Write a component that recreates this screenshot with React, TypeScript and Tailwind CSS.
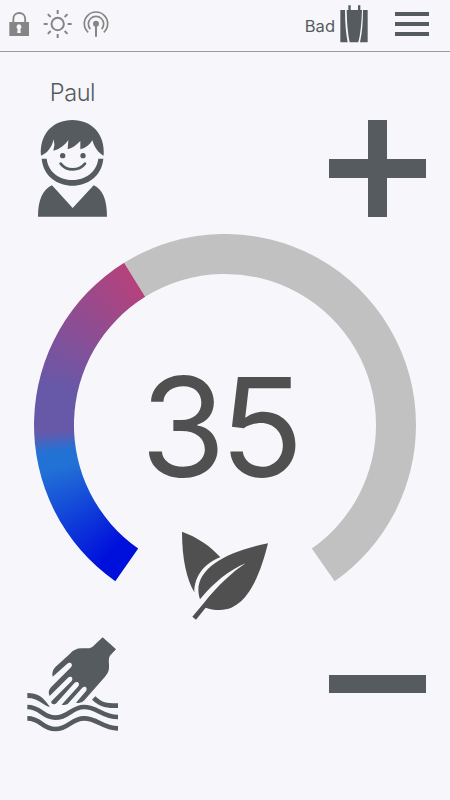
function LockIcon() {
  return (
    <svg viewBox="27 33 63 78" className="h-[26px] w-[21px]" fill="#858585">
      <path
        fillRule="evenodd"
        d="M28 66H87V108H28ZM57 73a8 8 0 0 0-4 14.500L51.500 99H62.500L61 87.500A8 8 0 0 0 57 73Z"
      />
      <path d="M40 66V57C40 33 75.500 33 75.500 57V66" fill="none" stroke="#858585" strokeWidth="5.500" />
    </svg>
  );
}

function SunIcon() {
  return (
    <svg viewBox="129 27 90 90" className="h-[30px] w-[30px]" fill="none" stroke="#858585" strokeWidth="6">
      <circle cx="173" cy="72" r="18.500" />
      <path d="M173 30V42M173 102V114M131 72H143M203 72H215M143.500 42.500L152 51M194 93L202.500 101.500M202.500 42.500L194 51M152 93L143.500 101.500" />
    </svg>
  );
}

function SignalIcon() {
  return (
    <svg viewBox="249 30 78 84" className="h-[28px] w-[26px]" fill="none" stroke="#858585" strokeWidth="5">
      <path d="M264.500 97A35 35 0 1 1 311.500 97" />
      <path d="M271 87.500A23 23 0 1 1 305 87.500" />
      <circle cx="288" cy="71" r="9" fill="#858585" stroke="none" />
      <path d="M288 72V110" strokeWidth="6" />
    </svg>
  );
}

function TowelIcon() {
  return (
    <svg viewBox="150 15 84 114" className="h-[38px] w-[28px]" fill="#555b5e">
      <path d="M151 30H165Q165 88 173 127H151Z" />
      <path d="M219 30H233V127H210Q219 88 219 30Z" />
      <path d="M170 30H175V16H182V30H204V16H211V30H216Q214 92 205 127H179Q171 92 170 30Z" />
    </svg>
  );
}

function PersonIcon() {
  return (
    <svg viewBox="36 147 213 294" className="h-[98px] w-[71px]" fill="#555b5e">
      <path d="M48 257C43 191 85 150 142 150C199 150 241 191 236 257C220 249 208 232 202 211C194 225 182 234 166 238V213C154 225 143 234 128 238L130 210C119 226 104 238 85 242Q91 225 86 208C80 234 66 250 48 257Z" />
      <path d="M50 266H65C75 351 209 351 220 266H235C225 374 60 374 50 266Z" />
      <circle cx="113" cy="257" r="8" />
      <circle cx="174" cy="257" r="8" />
      <path d="M107 281C124 304 162 304 180 281" fill="none" stroke="#555b5e" strokeWidth="8" strokeLinecap="round" />
      <path d="M81 346L143 414L206 346C233 358 246 389 246 440H39C39 389 54 358 81 346Z" />
    </svg>
  );
}

function LeafIcon() {
  return (
    <svg viewBox="33 33 264 270" className="h-[90px] w-[88px]" fill="#505050">
      <path d="M36 35C80 51 121 77 151 112C108 128 73 164 73 217C51 178 36 120 36 35Z" />
      <path d="M294 70C271 163 231 270 150 270C132 270 119 268 107 263L78 299L67 290L101 250C145 195 187 156 227 130C177 151 131 188 90 238C62 155 159 95 294 70Z" />
    </svg>
  );
}

function HandIcon() {
  return (
    <svg viewBox="36 36 276 285" className="h-[95px] w-[92px]" fill="#555b5e">
      <path d="M263 37L303 73L286 91C277 103 285 119 281 136C279 144 275 149 270 155L208 226Q199 237 183 233L213 198C219 188 210 181 202 188L158 237Q149 241 140 239L190 184C196 174 187 167 179 173L124 235C117 242 105 235 110 228L170 168C176 158 168 151 159 158L104 213C99 203 101 195 108 187L168 127C176 117 165 108 156 117L113 155C110 143 113 134 122 125L165 86C174 76 185 70 200 70H223L232 66Z" />
      <path d="M37 204C68 204 84 215 105 246C83 242 72 219 37 219Z" />
      <path d="M241 214C266 236 276 235 309 235V249C276 249 258 248 231 224Z" />
      <path
        d="M37 246C79 246 81 278 121 278C161 278 169 246 207 246C248 246 261 276 309 276M37 280C79 280 81 312 121 312C161 312 169 280 207 280C248 280 261 310 309 310"
        fill="none"
        stroke="#555b5e"
        strokeWidth="14"
      />
    </svg>
  );
}

function Header() {
  return (
    <header className="flex h-[52px] items-start justify-between border-b border-[#999999]">
      <div className="flex items-start pl-[9px]">
        <div className="pt-[11px]">
          <LockIcon />
        </div>
        <div className="pt-[9px] pl-[13px]">
          <SunIcon />
        </div>
        <div className="pt-[10px] pl-[10px]">
          <SignalIcon />
        </div>
      </div>
      <div className="flex items-start pr-[21px]">
        <span className="pt-[14px] text-[16.5px] leading-6 text-[#555b5e]">Bad</span>
        <div className="pt-[5px] pl-[5px]">
          <TowelIcon />
        </div>
        <button aria-label="Menu" className="mt-[12px] ml-[27px] flex w-[34px] flex-col gap-[6px]">
          <span className="h-1 bg-[#555b5e]" />
          <span className="h-1 bg-[#555b5e]" />
          <span className="h-1 bg-[#555b5e]" />
        </button>
      </div>
    </header>
  );
}

function Dial({ value }: { value: number }) {
  return (
    <section className="relative mx-auto mt-[17px] h-[386px] w-[382px]">
      <svg viewBox="0 0 382 382" className="absolute top-0 left-0 h-[382px] w-[382px]">
        <path
          d="M90.100 28.800A191 191 0 0 1 382 191A191 191 0 0 1 300.700 347.300L277.800 314.600A151 151 0 0 0 342 191A151 151 0 0 0 111.200 62.800Z"
          fill="#c1c1c1"
        />
      </svg>
      <div className="absolute top-0 left-0 h-[382px] w-[382px] bg-[conic-gradient(#0010dc_222deg,#2272d6_256deg,#2272d6_261deg,#6858a8_268deg,#6858a8_283deg,#b5427c_328deg)] [clip-path:path('M81.300_347.300A191_191_0_0_1_90.100_28.800L111.200_62.800A151_151_0_0_0_104.200_314.600Z')]" />
      <div className="relative flex flex-col items-center">
        <span className="mt-[123px] -ml-[12px] text-[138px] leading-[140px] tracking-[-6px] text-[#505050]">
          {value}
        </span>
        <div className="mt-[34px]">
          <LeafIcon />
        </div>
      </div>
    </section>
  );
}

export default function App() {
  return (
    <div className="h-[800px] w-[450px] overflow-hidden bg-[#f7f7fb] font-['Inter',sans-serif]">
      <Header />
      <main>
        <div className="flex justify-between pt-[25px] pr-6 pl-[37px]">
          <div className="flex w-[71px] flex-col items-center">
            <span className="h-[42px] pt-px text-[23.5px] leading-[30px] font-light tracking-[-0.4px] text-[#555b5e]">
              Paul
            </span>
            <PersonIcon />
          </div>
          <svg viewBox="0 0 97 97" className="mt-[43px] h-[97px] w-[97px]" fill="#555b5e">
            <path d="M39 0H58V39H97V58H58V97H39V58H0V39H39Z" />
          </svg>
        </div>
        <Dial value={35} />
        <div className="flex justify-between pt-[17px] pr-6 pl-[27px]">
          <HandIcon />
          <div className="mt-[38px] h-[18px] w-[97px] bg-[#555b5e]" />
        </div>
      </main>
    </div>
  );
}
